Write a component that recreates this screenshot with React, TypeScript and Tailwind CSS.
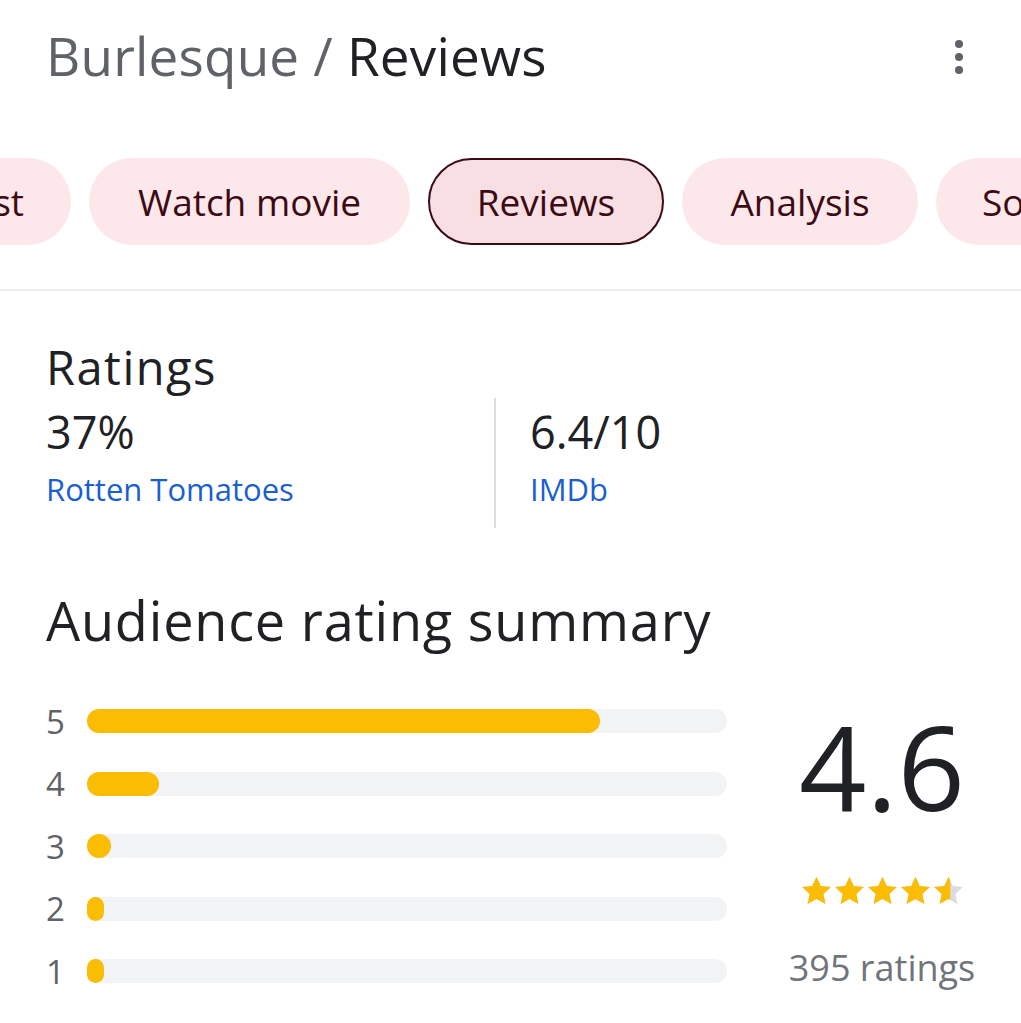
import React from "react";

const STAR = "M12 2.5l2.94 6.36 6.96.78-5.18 4.72 1.42 6.86L12 17.77l-6.14 3.45 1.42-6.86L2.1 9.64l6.96-.78z";

function Star({ fill }: { fill: number }) {
  const id = React.useId();
  return (
    <svg width="35" height="35" viewBox="0 0 24 24" className="-mx-[1px]">
      <defs>
        <clipPath id={id}>
          <rect x="0" y="0" width={24 * fill} height="24" />
        </clipPath>
      </defs>
      <path d={STAR} fill="#dadce0" />
      <path d={STAR} fill="#fbbc04" clipPath={`url(#${id})`} />
    </svg>
  );
}

const bars = [
  { n: 5, w: 513 },
  { n: 4, w: 72 },
  { n: 3, w: 24 },
  { n: 2, w: 17 },
  { n: 1, w: 17 },
];

export default function App() {
  return (
    <div className="w-[1021px] h-[1023px] bg-white overflow-hidden" style={{ fontFamily: "'Open Sans', Roboto, 'Liberation Sans', sans-serif" }}>
      {/* header */}
      <div className="flex items-center justify-between pl-[46px] pr-[58px] pt-[20px] h-[90px]">
        <div className="text-[53px] leading-none tracking-[0.2px]">
          <span className="text-[#5f6368]">Burlesque / </span>
          <span className="text-[#202124] font-medium">Reviews</span>
        </div>
        <div className="flex flex-col gap-[5px] items-center mt-[4px]">
          <div className="w-[8px] h-[8px] rounded-full bg-[#5f6368]" />
          <div className="w-[8px] h-[8px] rounded-full bg-[#5f6368]" />
          <div className="w-[8px] h-[8px] rounded-full bg-[#5f6368]" />
        </div>
      </div>

      {/* chips */}
      <div className="flex gap-[18px] mt-[68px] overflow-hidden whitespace-nowrap">
        <div className="shrink-0 ml-[-91px] w-[162px] h-[87px] rounded-full bg-[#fce8ea] flex items-center justify-end pr-[47px] text-[37px] text-[#3c0a14]">Cast</div>
        <div className="shrink-0 h-[87px] w-[321px] justify-center rounded-full bg-[#fce8ea] flex items-center text-[37px] text-[#3c0a14]">Watch movie</div>
        <div className="shrink-0 h-[87px] w-[236px] justify-center rounded-full bg-[#f8dfe3] border-2 border-[#3c0a14] flex items-center text-[37px] text-[#3c0a14]">Reviews</div>
        <div className="shrink-0 h-[87px] w-[236px] justify-center rounded-full bg-[#fce8ea] flex items-center text-[37px] text-[#3c0a14]">Analysis</div>
        <div className="shrink-0 h-[87px] px-[46px] rounded-full bg-[#fce8ea] flex items-center text-[37px] text-[#3c0a14]">Soundtrack</div>
      </div>

      <div className="h-[2px] bg-[#ebedf0] mt-[44px]" />

      {/* ratings */}
      <div className="pl-[46px] pt-[50px]">
        <div className="text-[47px] leading-[52px] tracking-[1.5px] text-[#202124]">Ratings</div>
        <div className="flex">
          <div className="w-[448px] pt-[15px]">
            <div className="text-[45px] leading-[48px] text-[#202124]">37%</div>
            <div className="text-[31px] leading-[40px] mt-[13px] text-[#1a5fd0]">Rotten Tomatoes</div>
          </div>
          <div className="w-[2px] h-[130px] bg-[#dadce0] mt-[5px]" />
          <div className="pl-[34px] pt-[15px]">
            <div className="text-[45px] leading-[48px] text-[#202124]">6.4/10</div>
            <div className="text-[31px] leading-[40px] mt-[13px] text-[#1a5fd0]">IMDb</div>
          </div>
        </div>
      </div>

      {/* audience */}
      <div className="pl-[46px] mt-[62px]">
        <div className="text-[54px] leading-[60px] tracking-[0.8px] text-[#202124]">Audience rating summary</div>
        <div className="flex mt-[59px]">
          <div className="flex flex-col gap-[38.5px]">
            {bars.map((b) => (
              <div key={b.n} className="flex items-center h-[24px]">
                <div className="w-[41px] text-[33px] leading-none text-[#5f6368]">{b.n}</div>
                <div className="w-[640px] h-[24px] rounded-full bg-[#f1f3f4]">
                  <div className="h-full rounded-full bg-[#fbbc04]" style={{ width: b.w }} />
                </div>
              </div>
            ))}
          </div>
          <div className="flex-1 flex flex-col items-center pl-[28px] mr-[12px]">
            <div className="text-[118px] leading-none text-[#202124] mt-[-2px]">4.6</div>
            <div className="flex mt-[48px]">
              <Star fill={1} />
              <Star fill={1} />
              <Star fill={1} />
              <Star fill={1} />
              <Star fill={0.55} />
            </div>
            <div className="text-[36px] leading-none text-[#70757a] mt-[42px]">395 ratings</div>
          </div>
        </div>
      </div>
    </div>
  );
}
